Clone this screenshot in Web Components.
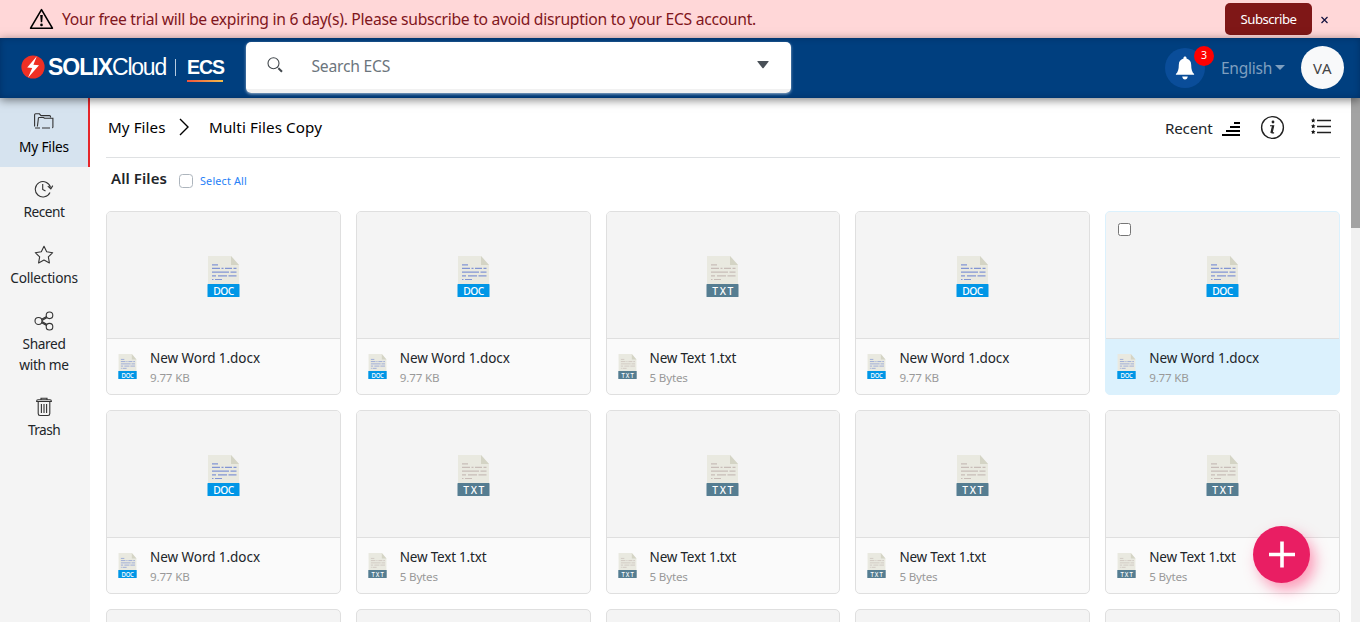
<!DOCTYPE html>
<html lang="en">
<head>
<meta charset="utf-8">
<title>SOLIXCloud ECS</title>
<style>
html,body{margin:0;height:100%;overflow:hidden}
body{font-family:"Noto Sans","Open Sans",sans-serif;color:#212529;background:#fff}
</style>
</head>
<body>
<ecs-app></ecs-app>
<script>
function define(name, html, after) {
  const template = document.createElement('template');
  template.innerHTML = html;
  customElements.define(name, class extends HTMLElement {
    connectedCallback() {
      if (this.shadowRoot) return;
      this.attachShadow({mode: 'open'}).append(template.content.cloneNode(true));
      if (after) after(this, this.shadowRoot);
    }
  });
}

/* One line of text, tracked so that it takes the given width. */
define('ui-text', `<style>:host{display:inline-block;white-space:nowrap;flex:none}</style><slot></slot>`, el => {
  const w = parseFloat(el.getAttribute('w'));
  if (!w) return;
  const natural = el.getBoundingClientRect().width;
  const n = el.textContent.length;
  el.style.letterSpacing = ((w - natural) / n).toFixed(3) + 'px';
});

define('trial-banner', `<style>
:host{display:flex;align-items:center;height:38px;background:#ffd7d8;color:#7f1620;padding:0 31px 0 29px;box-sizing:border-box;font-size:15.7px}
svg{flex:none}
.msg{margin-left:8px;flex:1;line-height:38px}
button{font:13.2px "Noto Sans",sans-serif;width:87px;height:32px;border:0;border-radius:5px;background:#7f1717;color:#fff;padding:0;margin-right:8px}
</style>
<svg width="25" height="22" viewBox="0 0 25 22"><path d="M12.5 1.6 1.6 20.2h21.8z" fill="none" stroke="#000" stroke-width="1.6" stroke-linejoin="round"/><path d="M11.2 7h2.6l-.6 7.2h-1.4z"/><circle cx="12.5" cy="16.9" r="1.35"/></svg>
<div class="msg"><ui-text w="694">Your free trial will be expiring in 6 day(s). Please subscribe to avoid disruption to your ECS account.</ui-text></div>
<button><ui-text w="56">Subscribe</ui-text></button>
<svg width="9" height="9" viewBox="0 0 9 9"><path d="M1.5 2l6 6M7.5 2l-6 6" stroke="#131340" stroke-width="1.2"/></svg>`);

define('ecs-logo', `<style>
:host{display:flex;align-items:center;height:32px;color:#fff;font:23px/26px "Liberation Sans",sans-serif;width:202px}
b{font-weight:700}
.n{display:flex;margin-left:3px}
.bar{width:1px;height:17px;background:#b6cadf;margin:0 11px 0 9px}
.e{font-weight:700;font-size:19.5px;line-height:22px;border-bottom:2px solid;border-image:linear-gradient(90deg,#f0503c,#f5c14a) 1;height:24px;margin-top:4px;width:36px}
</style>
<svg width="24" height="24" viewBox="0 0 24 24"><circle cx="12" cy="12" r="11.6" fill="#ef3024"/><path d="M15.8 1.2 6.2 12.6l5 .3L7 22.8l11-12.6-5.6-.4z" fill="#fff"/></svg>
<span class="n"><b><ui-text w="64">SOLIX</ui-text></b><ui-text w="54">Cloud</ui-text></span><span class="bar"></span><span class="e"><ui-text w="37">ECS</ui-text></span>`);

define('search-box', `<style>
:host{display:flex;box-sizing:border-box;width:544.500px;height:51px;border-radius:5px;background:linear-gradient(#fff 47px,#f1f1f1 47px);box-shadow:0 1px 3px rgba(255,255,255,.6);padding:0 22px 0 20px;color:#6c757d}
.q{margin:15px 0 0 1px}.t{flex:1;margin-left:28.500px;line-height:49px;font-size:15.700px}.c{margin-top:19px}
</style>
<svg class="q" width="16" height="16" viewBox="0 0 16 16" fill="none" stroke="#42484d"><circle cx="6.5" cy="6.3" r="5.5" stroke-width="1.1"/><path d="m10.5 10.3 1.1 1.1" stroke-width="1"/><path d="m11.4 11.2 3.6 3.5" stroke-width="2"/></svg>
<span class="t"><ui-text w="78.5">Search ECS</ui-text></span>
<svg class="c" width="12" height="8" viewBox="0 0 12 8"><path d="M.8 0h10.4q.8 0 .3.8L6.600 7q-.6.7-1.200 0L.5.800Q0 0 .8 0z" fill="#495057"/></svg>`);

define('notification-bell', `<style>
:host{display:flex;align-items:center;justify-content:center;position:relative;width:40px;height:40px;border-radius:50%;background:#0a4d99}
.b{position:absolute;left:29px;top:-2px;width:20px;height:20px;border-radius:50%;background:#f00;color:#fff;font-size:10.5px;line-height:19px;text-align:center}
</style>
<svg width="20" height="24" viewBox="0 0 20 24" fill="#fff"><path d="M10 .6c.9 0 1.5.6 1.5 1.4v.6c3 .8 4.7 3.2 4.7 6.3 0 4.2.8 7 2.9 9.2v.7H.9v-.7c2.1-2.2 2.9-5 2.9-9.2 0-3.100 1.700-5.500 4.700-6.300V2C8.500 1.200 9.100.6 10 .6zM7.200 20.500h5.600q-.5 3-2.800 3t-2.800-3z"/></svg>
<span class="b">3</span>`);

define('app-header', `<style>
:host{display:flex;height:60px;background:#003f7f;position:relative;z-index:2;box-shadow:0 2px 9px rgba(0,0,0,.5),inset 0 0 6px rgba(0,20,50,.35);box-sizing:border-box;padding:0 16px 0 21px}
ecs-logo{margin-top:13px}search-box{margin:4px 0 0 23px}
.r{margin-left:auto;display:flex;align-items:center;height:60px}
.l{margin-left:16px;color:#7f9fbf;font-size:15.5px;display:flex;align-items:center;line-height:60px}
.l svg{margin:-2px 1px 0 3px}
.a{margin:0 0 1px 15px;width:43px;height:43px;border-radius:50%;background:#f8f9fa;color:#444;font-size:15px;line-height:44px;text-align:center}
</style>
<ecs-logo></ecs-logo><search-box></search-box>
<div class="r"><notification-bell></notification-bell><span class="l"><ui-text w="51">English</ui-text><svg width="10" height="5" viewBox="0 0 10 5"><path d="M0 0h10L5 5z" fill="#7f9fbf"/></svg></span><span class="a"><ui-text w="19">VA</ui-text></span></div>`);

define('nav-item', `<style>
:host{display:flex;flex-direction:column;align-items:center;box-sizing:border-box;padding:11.500px 2px 10px 0;font-size:13.700px;line-height:21px;color:#212529;text-align:center}
:host([active]){background:#d6e3ef;border-right:2px solid #e6262a;padding:13px 0 9px;height:69px;color:#000}
:host([active]) .t{margin-top:5px}
.i{height:20px;display:flex;align-items:center}
.t{margin-top:2px;display:flex;flex-direction:column;align-items:center}
</style><span class="i"><slot name="icon"></slot></span><span class="t"><slot></slot></span>`);

define('side-nav', `<style>
:host{display:block;width:90px;background:#f4f4f4;flex:none}
svg{fill:none;stroke:#333;stroke-width:1.1;display:block}
nav-item:not([active]){height:66px}
nav-item.two{height:87px}
</style>
<nav-item active><svg slot="icon" width="20" height="16" viewBox="0 0 20 16"><path d="M.6 13.400V1.800q0-1 1-1h3.800l1.600 1.800h8.500q1 0 1 1v.8M1 15h5M8 15h8"/><path d="M4.500 4.500h5l1 .800h8.400v8.700q0 .8-.8.800M3.400 13.500 4.500 4.500"/></svg><ui-text w="50">My Files</ui-text></nav-item>
<nav-item><svg slot="icon" width="20" height="18" viewBox="0 0 20 18"><path d="M16.500 7.500A7.700 7.700 0 1 0 16 12.500M8.700 4v5.500l2.800 1.600M13.800 6.200l3 2.600 2-3.200"/></svg><ui-text w="41">Recent</ui-text></nav-item>
<nav-item><svg slot="icon" width="20" height="19" viewBox="0 0 20 19"><path stroke-linejoin="round" d="m10 1.300 2.700 5.500 6 .9-4.350 4.200 1.050 6L10 15.100l-5.400 2.800 1.050-6L1.300 7.700l6-.9z"/></svg><ui-text w="67.500">Collections</ui-text></nav-item>
<nav-item class="two"><svg slot="icon" width="20" height="20" viewBox="0 0 20 20"><circle cx="4.500" cy="10" r="3.500"/><circle cx="15.500" cy="4.300" r="3.300"/><circle cx="15.500" cy="15.700" r="3.300"/><path d="m7.600 8.200 5-2.700M8 9.500l4.700-2.700M7.600 11.800l5 2.700M8 10.500l4.700 2.700"/></svg><ui-text w="43">Shared</ui-text><ui-text w="49.500">with me</ui-text></nav-item>
<nav-item style="padding-top:10.500px"><svg slot="icon" width="16" height="20" viewBox="0 0 16 20"><path d="M.6 4.500q0-1.700 1.400-1.700h12q1.400 0 1.400 1.700zM5 2.700V1.200h6v1.500M2.200 4.700V16.500q0 2 1.800 2h8q1.800 0 1.800-2V4.700M5.400 7v9M8 7v9M10.600 7v9"/></svg><ui-text w="32">Trash</ui-text></nav-item>`);

define('crumb-bar', `<style>
:host{display:flex;height:59px;border-bottom:1px solid #dfe1e3;font-size:15.200px;line-height:59px;color:#000}
.c{margin:20px 20.500px 0 13px}
.r{margin-left:auto;display:flex;padding-right:9px}
.r ui-text{line-height:61px;color:#212529}
svg{flex:none}
</style>
<ui-text style="margin-left:2px" w="57.500">My Files</ui-text>
<svg class="c" width="10" height="18" viewBox="0 0 10 18"><path d="m1 1 8 8-8 8" fill="none" stroke="#000" stroke-width="1.400"/></svg>
<ui-text w="113">Multi Files Copy</ui-text>
<div class="r"><ui-text w="47.500">Recent</ui-text>
<svg style="margin:24px 0 0 9.500px" width="18" height="14" viewBox="0 0 18 14"><path d="M12 0h6v2h-6zM8 4h10v2H8zM4 8h14v2H4zM0 12h18v2H0z"/></svg>
<svg style="margin:17px 0 0 20px" width="25" height="25" viewBox="0 0 25 25"><circle cx="12.500" cy="12.500" r="10.900" fill="none" stroke="#212121" stroke-width="1.400"/><circle cx="13" cy="7" r="1.400" fill="#212121"/><path d="M10 10.700h3.700l-1.600 7.200h2" fill="none" stroke="#212121" stroke-width="1.100"/><path d="m12.800 10.800-1.700 7.100" stroke="#212121" stroke-width="1.600"/></svg>
<svg style="margin:20px 0 0 26px" width="20" height="16" viewBox="0 0 20 16"><path d="M6 2.500h14M6 8.500h14M6 14.500h14" stroke="#212121" stroke-width="1.300"/><g fill="#111"><path id="s" d="m2.200 0 .7 1.500 1.600.2-1.200 1.100.3 1.700-1.400-.8-1.400.8.300-1.700L0 1.700l1.600-.2z"/><use href="#s" y="5.800"/><use href="#s" y="11.500"/></g></svg></div>`);

define('file-icon', `<style>
:host{display:block;width:33px;height:41px}
:host([small]){width:19px;height:25px}
svg{display:block;width:100%;height:100%}
text{font:500 10.300px "Noto Sans",sans-serif;fill:#fff}
</style>
<svg viewBox="0 0 33 41.500" preserveAspectRatio="none"><path d="M1 0h23l8 9v20H1z" fill="#e9e9e0"/><path d="M24 0v9h8z" fill="#d4d4c5"/>
<path class="l" fill="none" stroke-width="1.200" d="M5 9h6M5 12.600h8M14.500 12.600h2M18 12.600h7M26.500 12.600h3M5 16.400h17M23.500 16.400h6M5 20.100h4M11 20.100h9M21.500 20.100h8M5 23.800h1.500M8 23.800h7"/>
<rect class="r" x=".5" y="28.400" width="32" height="13.100" rx=".6"/><text x="16.800" y="39.400" text-anchor="middle" textLength="21"></text></svg>`, (el, root) => {
  const doc = el.getAttribute('type') === 'doc';
  root.querySelector('.l').setAttribute('stroke', doc ? '#8295d3' : '#c8bdb8');
  root.querySelector('.r').setAttribute('fill', doc ? '#0096e6' : '#557d91');
  root.querySelector('text').textContent = doc ? 'DOC' : 'TXT';
});

define('file-card', `<style>
:host{display:flex;flex-direction:column;position:relative;box-sizing:border-box;height:184px;border:1px solid #dfdfdf;border-radius:5px;overflow:hidden;background:#fafafa}
:host([selected]){background:#dbf1fd;border-color:#dbf1fd}
.p{background:#f4f4f4;border-bottom:1px solid #dfdfdf;display:flex;justify-content:center;padding-top:44px;box-sizing:border-box;height:127px}
.f{display:flex;padding:15px 0 0 11px}
.n{margin-left:13px;margin-top:-6px;display:flex;flex-direction:column;align-items:flex-start}
.a{font-size:13.500px;line-height:21px}.b{font-size:11.600px;line-height:18px;color:#999}
.k{display:none;position:absolute;left:12px;top:11px;width:13px;height:13px;box-sizing:border-box;border:1px solid #767676;border-radius:2.500px;background:#fff}
:host([selected]) .k{display:block}
</style><div class="p"></div><div class="f"><div class="n"></div></div><span class="k"></span>`, (el, root) => {
  const doc = el.getAttribute('type') === 'doc', t = doc ? 'doc' : 'txt';
  root.querySelector('.p').innerHTML = `<file-icon type="${t}"></file-icon>`;
  root.querySelector('.f').insertAdjacentHTML('afterbegin', `<file-icon small type="${t}"></file-icon>`);
  root.querySelector('.n').innerHTML = doc
    ? '<ui-text class="a" w="110">New Word 1.docx</ui-text><ui-text class="b" w="39.500">9.77 KB</ui-text>'
    : '<ui-text class="a" w="86.500">New Text 1.txt</ui-text><ui-text class="b" w="38">5 Bytes</ui-text>';
});

define('file-browser', `<style>
:host{display:block;flex:1;min-width:0;overflow:hidden;padding:0 11px 0 16px}
.h{display:flex;height:53px;padding-left:5px}
.h .t{font-size:15px;font-weight:600;line-height:40px}
.k{width:14px;height:14px;box-sizing:border-box;border:1px solid #adb5bd;border-radius:3.500px;margin:16px 7px 0 12px}
.s{font-size:10.800px;line-height:46px;color:#2680f7}
.g{display:grid;grid-template-columns:repeat(5,minmax(0,1fr));gap:15px}
</style>
<crumb-bar></crumb-bar>
<div class="h"><ui-text class="t" w="56">All Files</ui-text><span class="k"></span><ui-text class="s" w="47">Select All</ui-text></div>
<div class="g">
<file-card type="doc"></file-card><file-card type="doc"></file-card><file-card type="txt"></file-card><file-card type="doc"></file-card><file-card type="doc" selected></file-card>
<file-card type="doc"></file-card><file-card type="txt"></file-card><file-card type="txt"></file-card><file-card type="txt"></file-card><file-card type="txt"></file-card>
</div>
<div class="g" style="margin-top:15px"><file-shell></file-shell><file-shell></file-shell><file-shell></file-shell><file-shell></file-shell><file-shell></file-shell></div>`);

define('file-shell', `<style>:host{display:block;height:40px;border:1px solid #dfdfdf;border-radius:5px;background:#f4f4f4}</style>`);

define('scroll-bar', `<style>:host{display:block;width:9px;flex:none;background:#f1f1f1}div{height:130px;background:#a3a3a3}</style><div></div>`);

define('add-button', `<style>
:host{position:absolute;left:1253px;top:526px;width:57px;height:57px;border-radius:50%;background:#e91e63;box-shadow:5px 7px 14px rgba(255,60,120,.5);display:flex;align-items:center;justify-content:center;z-index:3}
</style><svg width="27" height="27" viewBox="0 0 27 27"><path d="M14 .5v26M1 13.500h26" stroke="#fff" stroke-width="3.600"/></svg>`);

define('ecs-app', `<style>
:host{display:flex;flex-direction:column;width:1360px;height:622px;overflow:hidden;position:relative}
.m{display:flex;flex:1;min-height:0}
</style>
<trial-banner></trial-banner><app-header></app-header>
<div class="m"><side-nav></side-nav><file-browser></file-browser><scroll-bar></scroll-bar></div>
<add-button></add-button>`);
</script>
</body>
</html>
